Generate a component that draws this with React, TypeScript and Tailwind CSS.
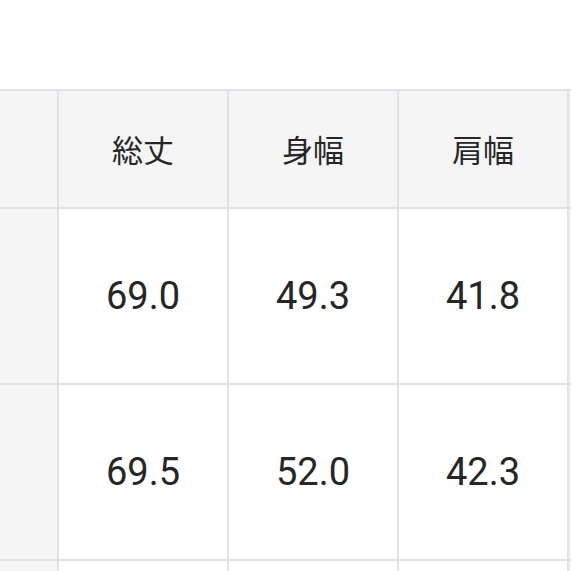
const headers = ["", "総丈", "身幅", "肩幅", ""];
const rows = [
  ["", "69.0", "49.3", "41.8", ""],
  ["", "69.5", "52.0", "42.3", ""],
  ["", "", "", "", ""],
];

export default function App() {
  return (
    <div
      className="w-[571px] h-[571px] overflow-hidden bg-white pt-[89px]"
      style={{ fontFamily: "Roboto, 'Noto Sans CJK JP', sans-serif" }}
    >
      <table className="border-collapse table-fixed ml-[-113px] text-[#262626]">
        <thead>
          <tr className="h-[118px]">
            {headers.map((h, i) => (
              <th
                key={i}
                className="w-[170px] min-w-[170px] border-2 border-[#dfe2e6] bg-[#f5f5f5] pt-[6px] text-[31px] font-normal text-center align-middle"
              >
                {h}
              </th>
            ))}
          </tr>
        </thead>
        <tbody>
          {rows.map((r, ri) => (
            <tr key={ri} className="h-[176px]">
              {r.map((c, ci) => (
                <td
                  key={ci}
                  className={`w-[170px] border-2 border-[#dfe2e6] text-[38px] text-center align-middle ${
                    ci === 0 || ci === 4 ? "bg-[#f5f5f5]" : "bg-white"
                  }`}
                >
                  {c}
                </td>
              ))}
            </tr>
          ))}
        </tbody>
      </table>
    </div>
  );
}
